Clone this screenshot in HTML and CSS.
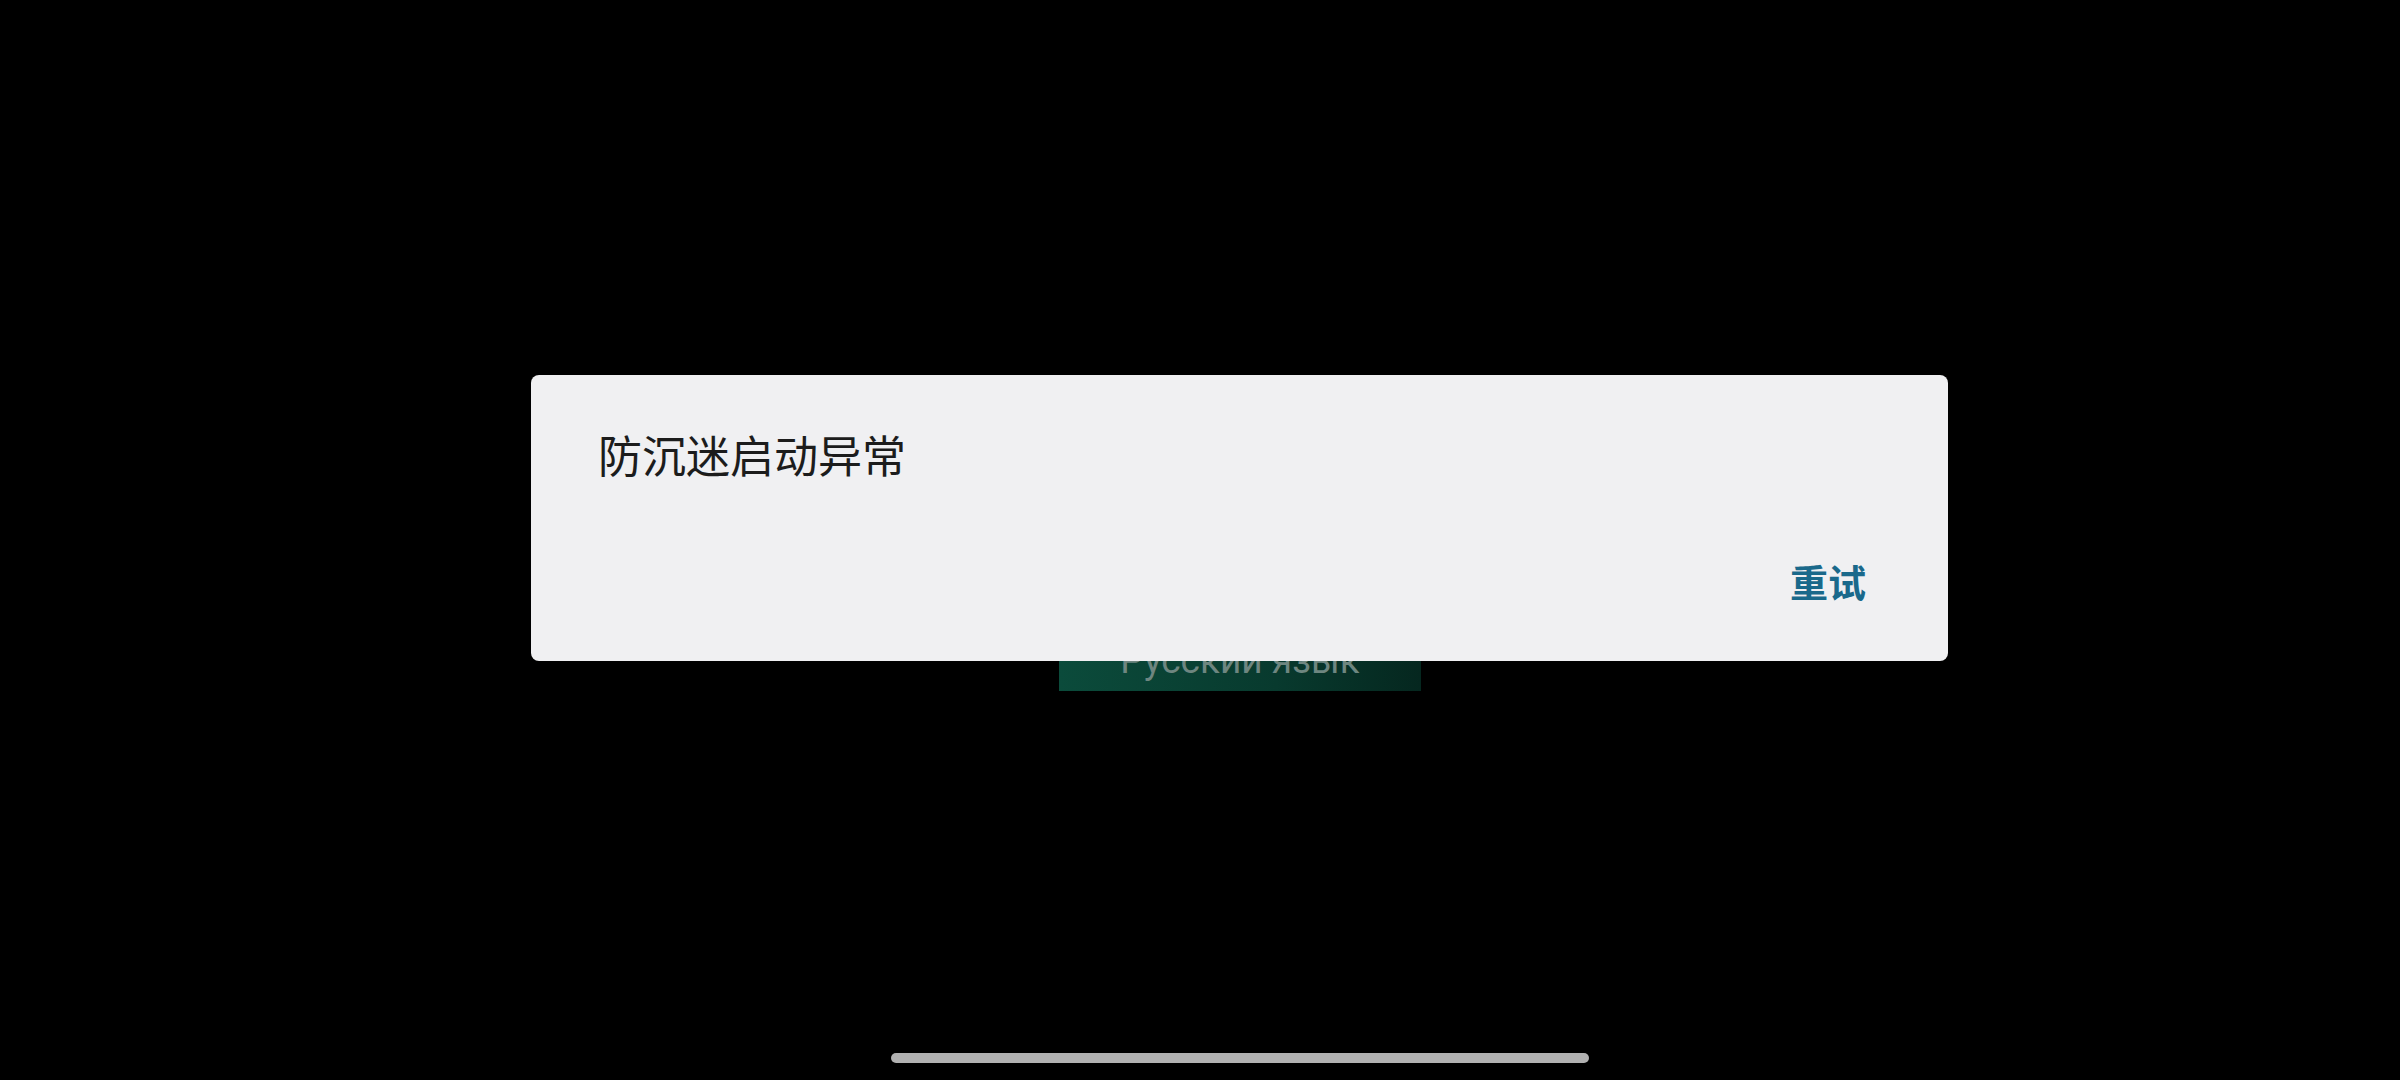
FILE: index.html
```html
<!DOCTYPE html>
<html lang="zh-CN">
<head>
<meta charset="utf-8">
<title>防沉迷启动异常</title>
<link rel="stylesheet" href="styles.css">
</head>
<body>
<div class="screen">
  <div class="content">
    <div class="lang-button">Русский язык</div>
  </div>
  <div class="dialog">
    <div class="dialog-title">防沉迷启动异常</div>
    <div class="dialog-actions">
      <span class="dialog-btn">重试</span>
    </div>
  </div>
  <div class="home-indicator"></div>
</div>
</body>
</html>
```
FILE: styles.css
```css
html, body {
  margin: 0;
  padding: 0;
  background: #000;
}
.screen {
  position: relative;
  width: 2400px;
  height: 1080px;
  background: #000;
  overflow: hidden;
}
.content {
  display: flex;
  flex-direction: column;
  align-items: center;
  padding-top: 591px;
  padding-left: 80px;
}
.lang-button {
  box-sizing: border-box;
  width: 362px;
  height: 100px;
  padding-top: 51px;
  text-align: center;
  font-family: Roboto, "Liberation Sans", sans-serif;
  font-size: 37px;
  line-height: 1;
  color: #6e8680;
  background: linear-gradient(90deg, #0b4b3b 0%, #083a2e 60%, #05271f 100%);
}
.dialog {
  position: absolute;
  left: 531px;
  top: 375px;
  width: 1417px;
  box-sizing: border-box;
  padding: 57px 82px 61px 67px;
  background: #f0f0f2;
  border-radius: 8px;
  display: flex;
  flex-direction: column;
  font-family: "Noto Sans CJK SC", "Noto Sans", sans-serif;
}
.dialog-title {
  font-size: 44px;
  line-height: 1;
  color: #1c1c1c;
}
.dialog-actions {
  display: flex;
  justify-content: flex-end;
  margin-top: 86px;
}
.dialog-btn {
  font-size: 38px;
  line-height: 1;
  font-weight: 700;
  color: #1a698b;
}
.home-indicator {
  position: absolute;
  left: 891px;
  top: 1053px;
  width: 698px;
  height: 10px;
  border-radius: 5px;
  background: #b1b1b1;
}
```
